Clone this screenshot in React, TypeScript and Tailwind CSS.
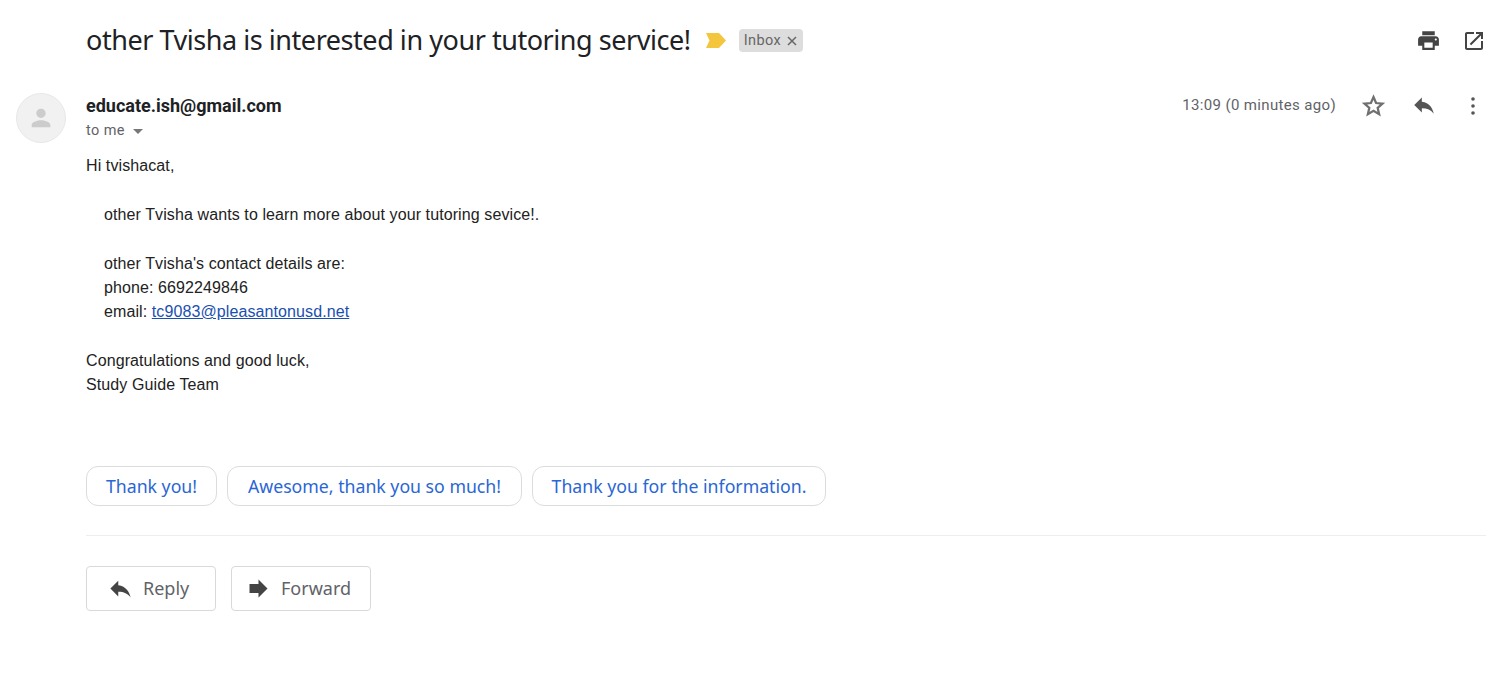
import React from "react";

const replyPath = "M10 9V5l-7 7 7 7v-4.1c5 0 8.5 1.6 11 5.1-1-5-4-10-11-11z";

function Icon({ d, className }: { d: string; className: string }) {
  return (
    <svg viewBox="0 0 24 24" className={className} fill="currentColor">
      <path d={d} />
    </svg>
  );
}

function Suggestion({ label, width }: { label: string; width: string }) {
  return (
    <button className={`${width} h-10 rounded-[12px] border border-[#dadce0] bg-white text-[17.700px] font-[450] text-[#2a66d4] font-['Noto_Sans',sans-serif]`}>
      {label}
    </button>
  );
}

export default function App() {
  return (
    <div className="w-[1497px] h-[673px] bg-white overflow-hidden font-['Liberation_Sans',sans-serif] text-[#222222]">
      {/* subject */}
      <div className="h-[81px] pl-[86px] pr-[11px] flex items-center">
        <h1 className="-mt-[1px] text-[27px] font-normal font-['Noto_Sans',sans-serif] text-[#202124] tracking-[-0.450px]">
          other Tvisha is interested in your tutoring service!
        </h1>
        <svg viewBox="0 0 20 15" className="ml-[15px] w-[20px] h-[15px]">
          <path d="M0 0h13l7 7.500-7 7.500H0l3.500-7.500z" fill="#f4c63d" />
        </svg>
        <span className="ml-[13px] h-[23px] pl-[5px] pr-[6px] rounded-[4px] bg-[#dddddd] text-[#666666] text-[14.500px] flex items-center gap-[6px] font-['Roboto',sans-serif] tracking-[0.4px]">
          Inbox
          <svg viewBox="0 0 10 10" className="w-[10px] h-[10px]" stroke="#666666" strokeWidth="1.500">
            <path d="M1 1l8 8M9 1l-8 8" />
          </svg>
        </span>
        <div className="ml-auto flex items-center gap-[21px] text-[#444444]">
          <Icon className="w-[25px] h-[25px]" d="M19 8H5c-1.660 0-3 1.340-3 3v6h4v4h12v-4h4v-6c0-1.660-1.340-3-3-3zm-3 11H8v-5h8v5zm3-7c-.550 0-1-.450-1-1s.450-1 1-1 1 .450 1 1-.450 1-1 1zm-1-9H6v4h12V3z" />
          <Icon className="w-[24px] h-[24px]" d="M19 19H5V5h7V3H5c-1.110 0-2 .900-2 2v14c0 1.100.890 2 2 2h14c1.100 0 2-.900 2-2v-7h-2v7zM14 3v2h3.590l-9.830 9.830 1.410 1.410L19 6.410V10h2V3h-7z" />
        </div>
      </div>

      {/* sender */}
      <div className="flex pl-[16px] pr-[11px] pt-[12px]">
        <div className="w-[50px] h-[50px] rounded-full bg-[#f1f1f1] border border-[#e8e8e8] flex items-center justify-center text-[#cccccc]">
          <Icon className="w-[28px] h-[28px]" d="M12 12c2.210 0 4-1.790 4-4s-1.790-4-4-4-4 1.790-4 4 1.790 4 4 4zm0 2c-2.670 0-8 1.340-8 4v2h16v-2c0-2.660-5.330-4-8-4z" />
        </div>
        <div className="ml-[20px] flex-1">
          <div className="flex justify-between">
            <div>
              <div className="text-[18px] leading-[25px] font-bold font-['Roboto',sans-serif] text-[#202124]">educate.ish@gmail.com</div>
              <div className="mt-[3px] flex items-center text-[14.500px] leading-[20px] text-[#5f6368] font-['Roboto',sans-serif] tracking-[0.4px]">
                to me
                <span className="ml-[8px] w-0 h-0 border-x-[5px] border-x-transparent border-t-[5px] border-t-[#777777]" />
              </div>
            </div>
            <div className="flex items-start text-[#555555]">
              <span className="text-[15px] leading-[20px] tracking-[0.35px] text-[#5f6368] font-['Roboto',sans-serif] mt-[2px]">13:09 (0 minutes ago)</span>
              <svg viewBox="0 0 24 24" className="ml-[24px] w-[27px] h-[27px] -mt-[1px]" fill="none" stroke="#707070" strokeWidth="2">
                <path d="M12 4.500l2.300 5.300 5.700.500-4.300 3.800 1.300 5.600-5-3-5 3 1.300-5.600L4 10.300l5.700-.500z" />
              </svg>
              <Icon className="ml-[24px] w-[26px] h-[26px] -mt-[1px]" d={replyPath} />
              <svg viewBox="0 0 4 18" className="ml-[34px] mr-[11px] mt-[4px] w-[4px] h-[18px]" fill="#555555">
                <circle cx="2" cy="2" r="1.800" />
                <circle cx="2" cy="9" r="1.800" />
                <circle cx="2" cy="16" r="1.800" />
              </svg>
            </div>
          </div>
        </div>
      </div>

      {/* message */}
      <div className="pl-[86px] pt-[11px] text-[16px] leading-[24px] tracking-[0.100px] text-[#222222]">
        <p>Hi tvishacat,</p>
        <div className="pl-[18px] pt-[25px]">
          <p>other Tvisha wants to learn more about your tutoring sevice!.</p>
          <p className="mt-[25px]">other Tvisha's contact details are:</p>
          <p>phone: 6692249846</p>
          <p>
            email: <a className="text-[#1a4fb0] underline">tc9083@pleasantonusd.net</a>
          </p>
        </div>
        <p className="mt-[25px]">Congratulations and good luck,</p>
        <p>Study Guide Team</p>
      </div>

      {/* smart replies */}
      <div className="pl-[86px] mt-[69px] flex gap-[10px]">
        <Suggestion width="w-[131px]" label="Thank you!" />
        <Suggestion width="w-[295px]" label="Awesome, thank you so much!" />
        <Suggestion width="w-[294px]" label="Thank you for the information." />
      </div>

      <div className="ml-[86px] mr-[11px] mt-[29px] border-t border-[#eeeeee]" />

      <div className="pl-[86px] mt-[30px] flex gap-[15px] font-['Noto_Sans',sans-serif] font-[450] text-[18px] text-[#5f6368]">
        <button className="w-[130px] h-[45px] rounded-[4px] border border-[#d9d9d9] flex items-center pl-[20px] gap-[9px]">
          <Icon className="w-[27px] h-[27px] text-[#444444]" d={replyPath} />
          Reply
        </button>
        <button className="w-[140px] h-[45px] rounded-[4px] border border-[#d9d9d9] flex items-center pl-[13px] gap-[9px]">
          <Icon className="w-[27px] h-[27px] text-[#444444]" d="M12 8V4l8 8-8 8v-4H4V8z" />
          Forward
        </button>
      </div>
    </div>
  );
}
